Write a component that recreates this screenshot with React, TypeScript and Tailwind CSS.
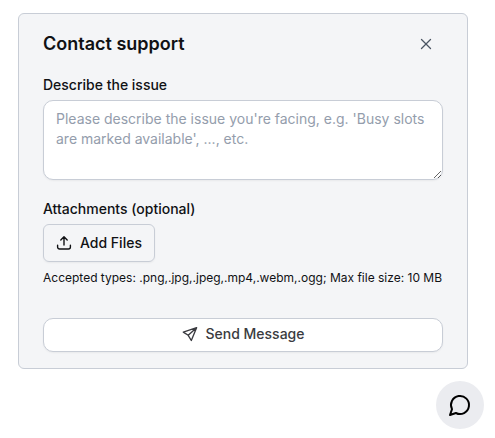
import React from "react";
import { X } from "lucide-react";

function UploadIcon() {
  return (
    <svg width="16" height="16" viewBox="0 0 16 16" fill="none" stroke="currentColor" strokeWidth="1.4" strokeLinecap="round" strokeLinejoin="round">
      <path d="M1.6 10.2v1.8a2 2 0 0 0 2 2h8.8a2 2 0 0 0 2-2v-1.8M8 10V2M4.8 5 8 1.8 11.2 5" />
    </svg>
  );
}

function SendIcon() {
  return (
    <svg width="16" height="16" viewBox="0 0 16 16" fill="none" stroke="currentColor" strokeWidth="1.35" strokeLinecap="round" strokeLinejoin="round">
      <path d="M14.6 1.7 1.3 6.1l4.9 3.2 3.1 5.2zM14.6 1.7 6.2 9.3" />
    </svg>
  );
}

function ChatIcon() {
  return (
    <svg width="24" height="24" viewBox="0 0 24 24" fill="none" stroke="currentColor" strokeWidth="2" strokeLinecap="round" strokeLinejoin="round">
      <path d="M7.9 20A9 9 0 1 0 4 16.1L2 22Z" />
    </svg>
  );
}

export default function App() {
  return (
    <div className="h-[438px] w-[495px] overflow-hidden bg-white font-['Inter',sans-serif] text-[#101114]">
      <div className="ml-[18px] mt-[13px] flex h-[356px] w-[450px] flex-col rounded-md border border-[#c8cdd6] bg-[#f4f5f7] px-6">
        <div className="mt-[18px] flex h-6 items-center justify-between">
          <h1 className="text-lg font-semibold leading-6">Contact support</h1>
          <button className="mr-2 text-[#4b5563]"><X size={18} strokeWidth={1.75} /></button>
        </div>
        <label className="mt-[19px] text-sm font-medium leading-5">Describe the issue</label>
        <textarea
          className="mt-[5px] block h-20 w-full shrink-0 resize rounded-[10px] border border-[#c8cdd6] bg-white px-3 py-2 text-sm leading-5 shadow-xs placeholder:text-[#949dac]"
          placeholder="Please describe the issue you're facing, e.g. 'Busy slots are marked available', ..., etc."
        />
        <label className="mt-[19px] text-sm font-medium leading-5">Attachments (optional)</label>
        <button className="mt-[5px] flex h-[38px] w-28 shrink-0 items-center gap-2 rounded-md border border-[#c8cdd6] px-3 text-sm font-medium shadow-xs">
          <UploadIcon /> Add Files
        </button>
        <p className="mt-2 whitespace-nowrap text-xs leading-4">Accepted types: .png,.jpg,.jpeg,.mp4,.webm,.ogg; Max file size: 10 MB</p>
        <button className="mt-8 flex h-[34px] shrink-0 items-center justify-center gap-[7px] rounded-[10px] border border-[#c8cdd6] bg-white pb-0.5 pl-px text-sm font-medium text-[#3a3b40] shadow-xs">
          <SendIcon /> Send Message
        </button>
      </div>
      <div className="ml-[436px] mt-3 flex size-12 items-center justify-center rounded-full bg-[#ebecf0] text-black">
        <ChatIcon />
      </div>
    </div>
  );
}
